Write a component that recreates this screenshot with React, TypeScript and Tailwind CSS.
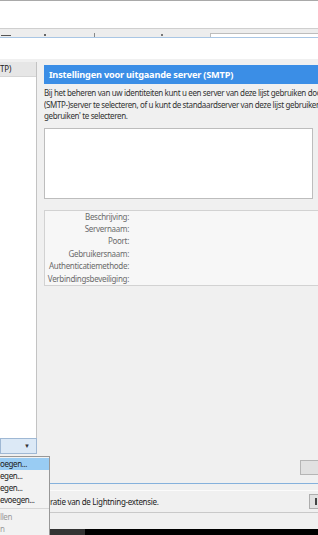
import React from "react";

const font = { fontFamily: '"Noto Sans", "Open Sans", sans-serif' };

export default function App() {
  const labels = [
    "Beschrijving:",
    "Servernaam:",
    "Poort:",
    "Gebruikersnaam:",
    "Authenticatiemethode:",
    "Verbindingsbeveiliging:",
  ];
  return (
    <div className="relative w-[318px] h-[535px] overflow-hidden bg-[#f0f0f0] flex flex-col" style={font}>
      {/* top window area */}
      <div className="h-[1px] bg-[#a9a9a9]" />
      <div className="h-[27px] bg-white" />
      <div className="h-[1px] bg-[#cfcfcf]" />
      <div className="h-[8px] bg-[#ededed] relative flex items-end">
        <div className="flex items-end w-full h-full">
          <div className="w-[10px] h-[1px] bg-[#555] ml-[1px] mb-[1px]" />
          <div className="w-[2px] h-[2px] bg-[#666] ml-[33px] mb-[1px]" />
          <div className="w-[1px] h-[4px] bg-[#888] ml-[48px]" />
          <div className="w-[2px] h-[2px] bg-[#777] ml-[66px] mb-[1px]" />
          <div className="ml-[47px] flex-1 h-[4px] border-l border-t border-[#bdbdbd] bg-white" />
        </div>
      </div>
      <div className="h-[1px] bg-[#a9c6e4]" />
      <div className="h-[21px] bg-white" />

      {/* main area */}
      <div className="flex flex-1 min-h-0 pt-[3px]">
        {/* left pane */}
        <div className="w-[37px] flex flex-col">
          <div className="flex-1 bg-white border-r border-[#c3c3c3] flex flex-col">
            <div className="h-[15px] bg-[#e6e6e6] border-b border-[#d6d6d6] flex items-center text-[8px] tracking-[-0.2px] text-[#222] whitespace-nowrap overflow-hidden">
              TP)
            </div>
          </div>
          <div className="h-[16px] bg-[#dce9f6] border border-[#9fb8d4] flex items-center justify-end pr-[6px]">
            <span className="text-[6px] leading-none text-[#333]">▼</span>
          </div>
          <div className="h-[29px]" />
        </div>

        {/* right pane */}
        <div className="flex-1 min-w-0 flex flex-col pl-[7px] pt-[3px] overflow-hidden">
          <div className="h-[19px] bg-[#3b8ee6] flex items-center pl-[5px] text-white font-bold text-[9.2px] tracking-[-0.2px] whitespace-nowrap">
            Instellingen voor uitgaande server (SMTP)
          </div>
          <div className="pt-[3px] text-[8px] tracking-[-0.36px] leading-[11.5px] text-[#333] whitespace-nowrap overflow-hidden">
            <div>Bij het beheren van uw identiteiten kunt u een server van deze lijst gebruiken door deze als uitgaande</div>
            <div>(SMTP-)server te selecteren, of u kunt de standaardserver van deze lijst gebruiken door 'Standaard</div>
            <div>gebruiken' te selecteren.</div>
          </div>
          <div className="mt-[6px] h-[71px] mr-[5px] bg-white border border-[#bdbdbd]" />
          <div className="mt-[11px] h-[76px] bg-[#f7f7f7] border border-[#d2d2d2] border-r-0 flex flex-col">
            {labels.map((l) => (
              <div key={l} className="w-[84px] text-right text-[8px] tracking-[-0.3px] leading-[12.4px] text-[#6b6b6b] whitespace-nowrap">
                {l}
              </div>
            ))}
          </div>
          <div className="flex-1" />
          <div className="flex justify-end mb-[8px]">
            <div className="w-[18px] h-[15px] bg-[#e1e1e1] border border-[#b5b5b5] border-r-0" />
          </div>
        </div>
      </div>

      {/* status area */}
      <div className="h-[1px] bg-[#85b1dc]" />
      <div className="h-[45px] bg-[#f0f0f0] flex flex-col">
        <div className="h-[7px] border-b border-[#fbfbfb]" />
        <div className="h-[21px] flex items-center">
          <div className="pl-[50px] text-[8px] tracking-[-0.3px] text-[#222] whitespace-nowrap flex-1">
            ratie van de Lightning-extensie.
          </div>
          <div className="w-[9px] h-[15px] bg-[#e1e1e1] border border-[#adadad] border-r-0 flex items-center justify-end">
            <div className="w-[2px] h-[7px] bg-[#444] mr-[1px]" />
          </div>
        </div>
        <div className="h-[1px] bg-[#c9c9c9]" />
      </div>
      <div className="h-[6px] bg-black flex">
        <div className="ml-[50px] w-[35px] bg-[#333]" />
      </div>

      {/* popup menu */}
      <div className="absolute left-0 top-[456px] w-[50px] h-[80px] bg-[#f2f2f2] border border-l-0 border-[#979797] text-[8px] tracking-[-0.4px] text-[#222] flex flex-col pt-[1px]">
        <div className="h-[12px] bg-[#99ccf3] flex items-center whitespace-nowrap">oegen...</div>
        <div className="h-[13px] flex items-center whitespace-nowrap">egen...</div>
        <div className="h-[13px] flex items-center whitespace-nowrap">egen...</div>
        <div className="h-[13px] flex items-center whitespace-nowrap">evoegen...</div>
        <div className="h-[1px] bg-[#d7d7d7] my-[2px]" />
        <div className="h-[13px] flex items-center whitespace-nowrap text-[#9a9a9a]">llen</div>
        <div className="h-[13px] flex items-center whitespace-nowrap text-[#9a9a9a]">n</div>
      </div>
    </div>
  );
}
